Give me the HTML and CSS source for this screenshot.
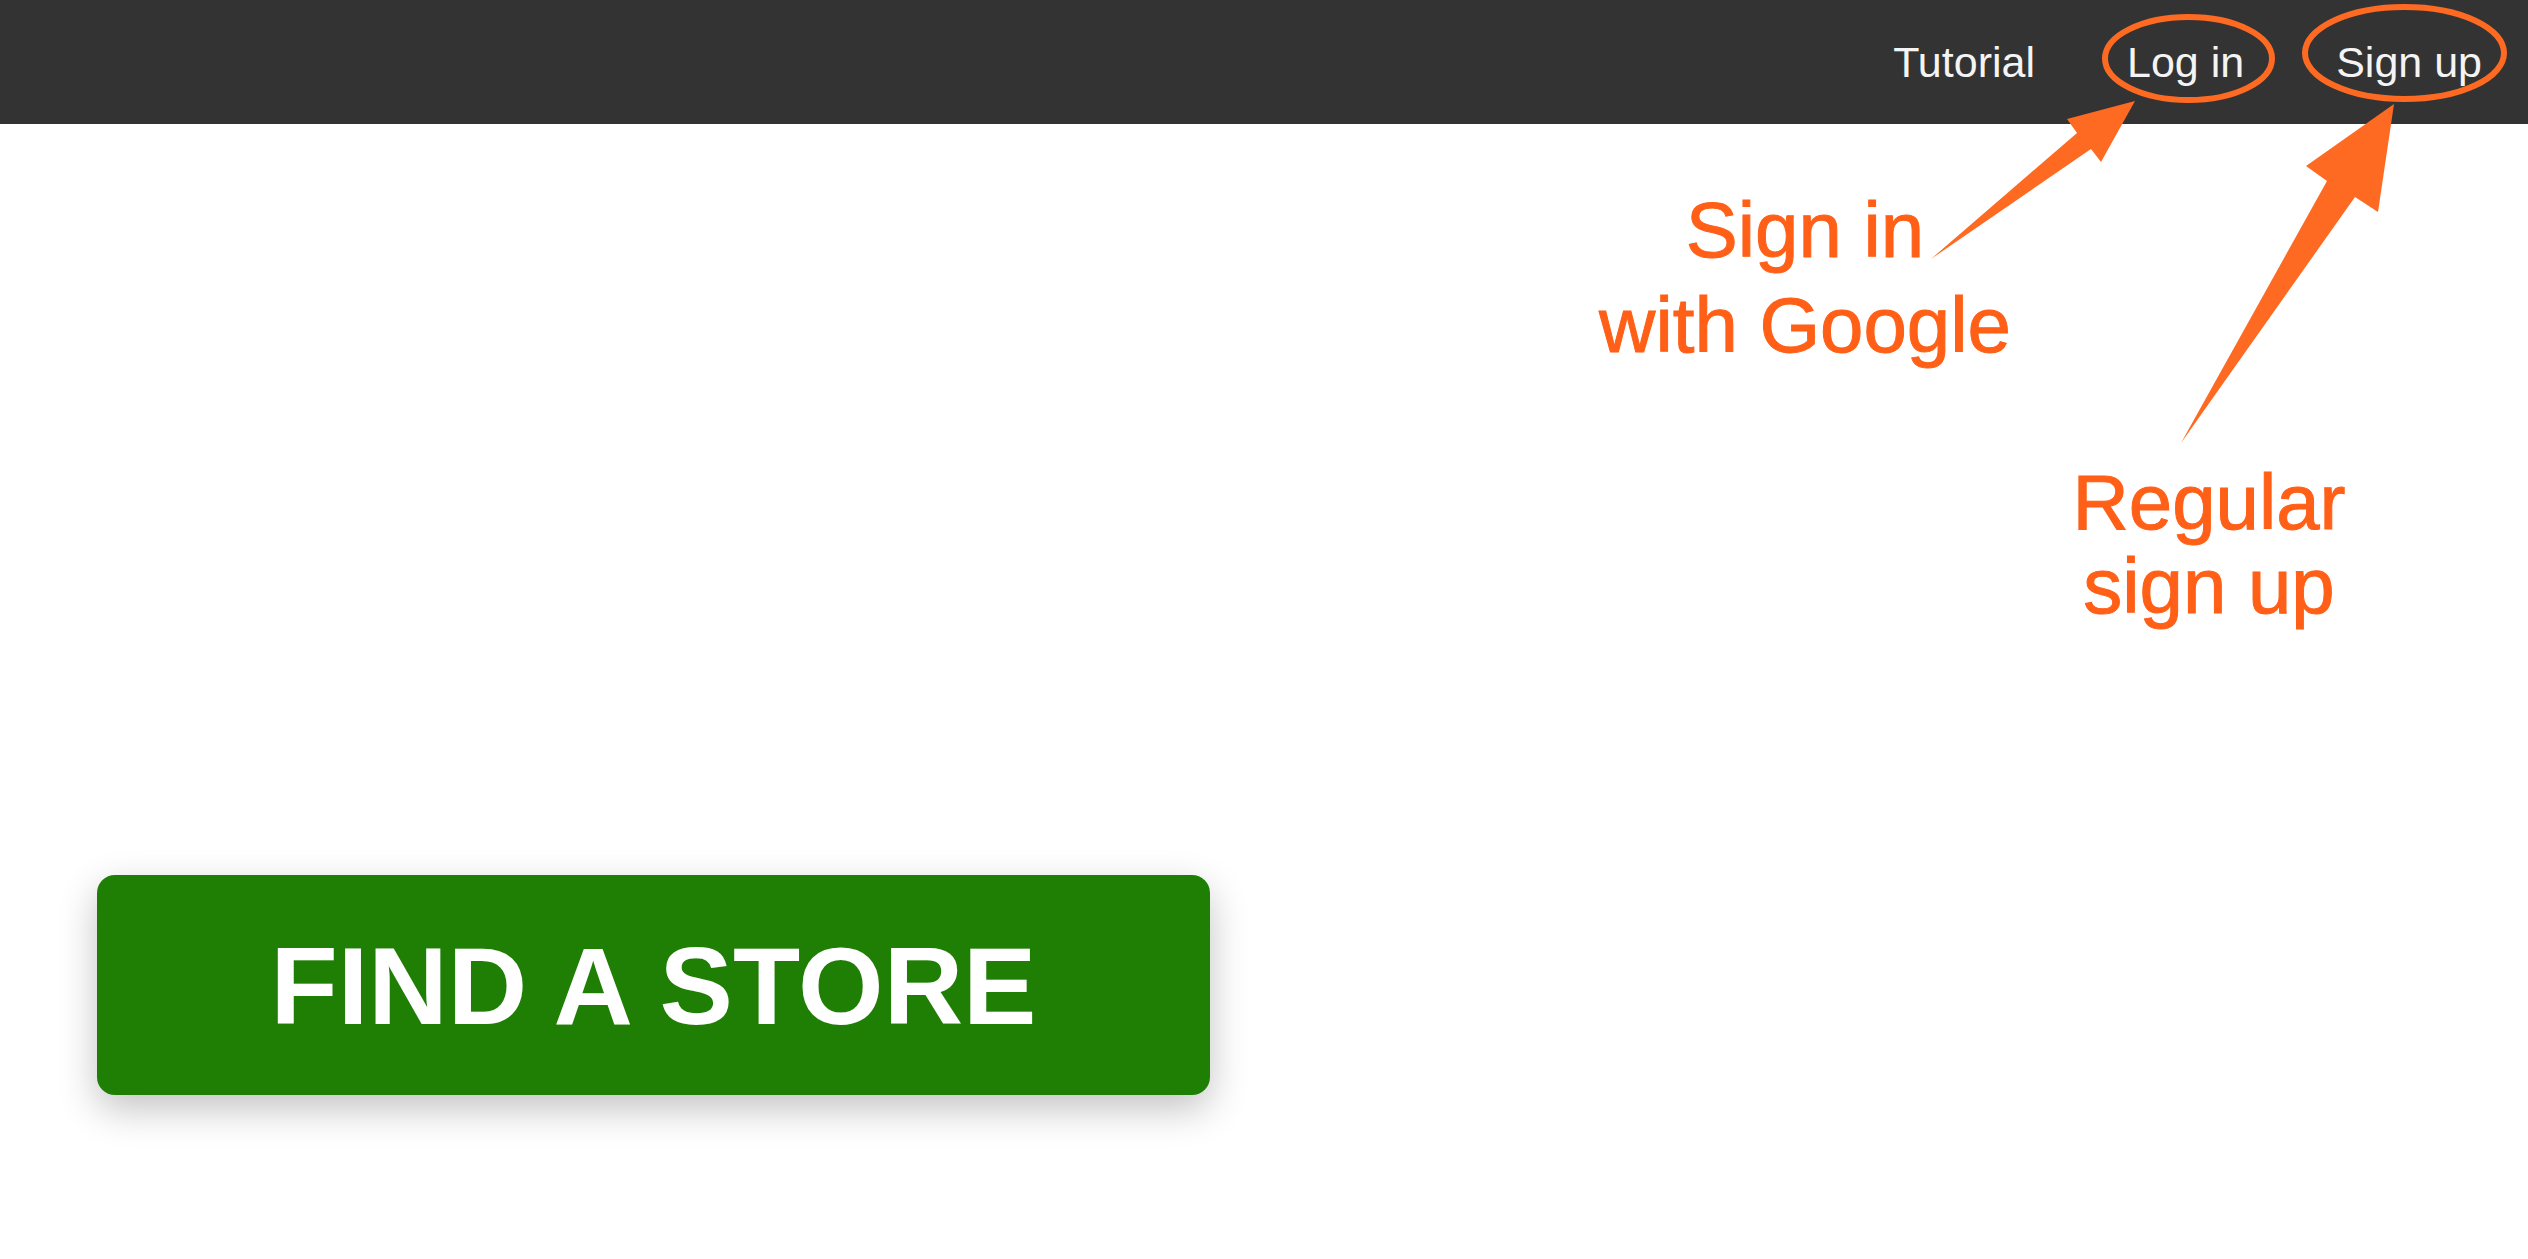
FILE: index.html
```html
<!DOCTYPE html>
<html lang="en">
<head>
<meta charset="utf-8">
<title>Find a store</title>
<link rel="stylesheet" href="styles.css">
</head>
<body>
<header class="navbar">
  <nav class="nav-links">
    <a class="nav-link" href="#">Tutorial</a>
    <a class="nav-link" href="#">Log in</a>
    <a class="nav-link" href="#">Sign up</a>
  </nav>
</header>
<main class="content">
  <a class="store-btn" href="#">FIND A STORE</a>
</main>

<svg class="annotations" width="2528" height="1259" viewBox="0 0 2528 1259" aria-hidden="true">
  <ellipse cx="2188.5" cy="58.5" rx="83.5" ry="41.5" fill="none" stroke="#ff6a22" stroke-width="6"/>
  <ellipse cx="2404.5" cy="53" rx="99.5" ry="46" fill="none" stroke="#ff6a22" stroke-width="6"/>
  <polygon fill="#ff6a22" points="2135,101 2067,119 2077,133 1931,259 2091,149 2101,162"/>
  <polygon fill="#ff6a22" points="2394,104 2306,166 2327,181 2181,443 2355,197 2378,212"/>
</svg>
<div class="note note-google">Sign in<br>with Google</div>
<div class="note note-signup">Regular<br>sign up</div>
</body>
</html>
```

FILE: styles.css
```css
html, body {
  margin: 0;
  padding: 0;
  background: #ffffff;
}

body {
  font-family: "Liberation Sans", Arial, sans-serif;
  width: 2528px;
  height: 1259px;
  overflow: hidden;
  position: relative;
}

.navbar {
  height: 124px;
  background: #333333;
  display: flex;
  align-items: center;
  justify-content: flex-end;
}

.nav-links {
  display: flex;
  align-items: center;
}

.nav-link {
  color: #f4f4f4;
  text-decoration: none;
  font-size: 43px;
  padding: 0 46px;
}

.content {
  padding: 751px 0 0 97px;
}

.store-btn {
  display: flex;
  align-items: center;
  justify-content: center;
  width: 1113px;
  height: 220px;
  background: #1f7f05;
  border-radius: 18px;
  box-shadow: 0 14px 38px rgba(0, 0, 0, 0.24);
  color: #ffffff;
  text-decoration: none;
  font-weight: bold;
  font-size: 110px;
  letter-spacing: 0;
}

.annotations {
  position: absolute;
  top: 0;
  left: 0;
  pointer-events: none;
}

.note {
  position: absolute;
  color: #ff5f16;
  font-size: 78px;
  text-align: center;
  white-space: nowrap;
  -webkit-text-stroke: 1px #ff5f16;
}

.note-google {
  left: 1505px;
  top: 183px;
  width: 600px;
  line-height: 95px;
}

.note-signup {
  left: 2009px;
  top: 460px;
  width: 400px;
  line-height: 84px;
}
```
